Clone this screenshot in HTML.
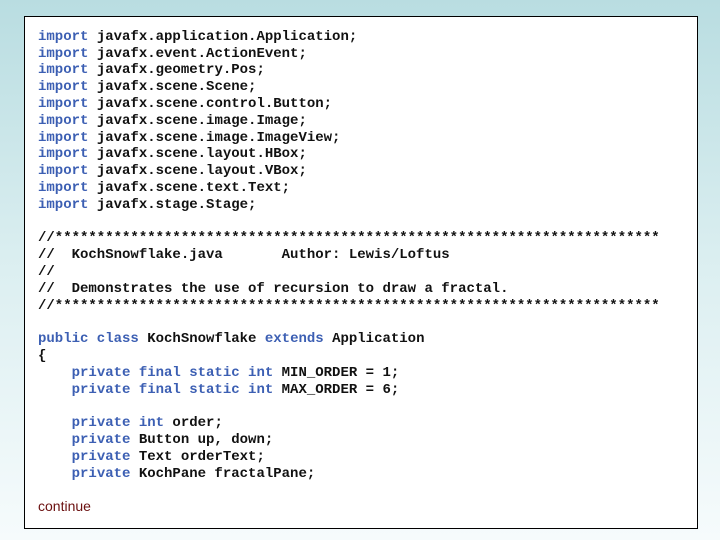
<!DOCTYPE html>
<html><head><style>
html,body{margin:0;padding:0;width:720px;height:540px;overflow:hidden;
background:linear-gradient(to bottom,#b9dde1 0%,#dceff1 50%,#f6fbfc 100%);}
.box{position:absolute;left:24px;top:16px;width:672px;height:511px;background:#fff;border:1px solid #000;}
pre{position:absolute;left:38px;top:28.8px;margin:0;font-family:"Liberation Mono",monospace;font-weight:bold;font-size:14px;line-height:16.8px;color:#111;}
.k{color:#3c5fb3;}
.c{position:absolute;left:38px;top:498px;font-family:"Liberation Sans",sans-serif;font-size:14px;color:#6b1010;}
</style></head><body>
<div class="box"></div>
<pre><span class="k">import</span> javafx.application.Application;
<span class="k">import</span> javafx.event.ActionEvent;
<span class="k">import</span> javafx.geometry.Pos;
<span class="k">import</span> javafx.scene.Scene;
<span class="k">import</span> javafx.scene.control.Button;
<span class="k">import</span> javafx.scene.image.Image;
<span class="k">import</span> javafx.scene.image.ImageView;
<span class="k">import</span> javafx.scene.layout.HBox;
<span class="k">import</span> javafx.scene.layout.VBox;
<span class="k">import</span> javafx.scene.text.Text;
<span class="k">import</span> javafx.stage.Stage;

//************************************************************************
//  KochSnowflake.java       Author: Lewis/Loftus
//
//  Demonstrates the use of recursion to draw a fractal.
//************************************************************************

<span class="k">public class</span> KochSnowflake <span class="k">extends</span> Application
{
    <span class="k">private final static int</span> MIN_ORDER = 1;
    <span class="k">private final static int</span> MAX_ORDER = 6;

    <span class="k">private int</span> order;
    <span class="k">private</span> Button up, down;
    <span class="k">private</span> Text orderText;
    <span class="k">private</span> KochPane fractalPane;
</pre>
<div class="c">continue</div>
</body></html>
